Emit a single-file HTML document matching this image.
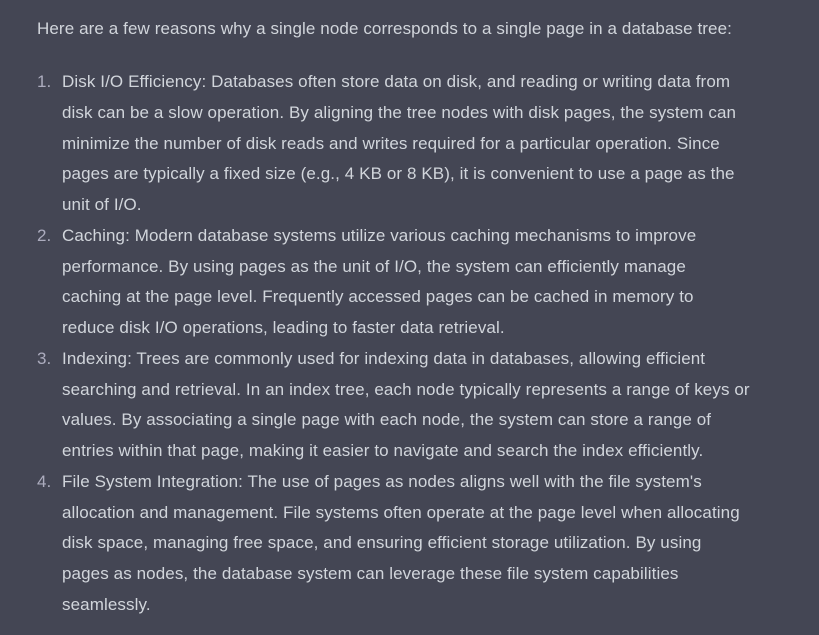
<!DOCTYPE html>
<html><head><meta charset="utf-8"><style>
html,body{margin:0;padding:0;width:819px;height:635px;background:#444654;overflow:hidden}
body{font-family:"Liberation Sans",sans-serif;font-size:17px;letter-spacing:0.1px;color:#d1d5db;position:relative}
.l{position:absolute;white-space:nowrap;line-height:30.77px;left:37px;top:14px}
#list{position:absolute;left:0;top:67px;width:819px}
#list div{height:30.77px;line-height:30.77px;white-space:nowrap;position:relative}
#list span.t{position:absolute;left:62px}
#list span.n{position:absolute;left:37px;top:0;color:#acacbe}
</style></head><body>
<div class="l">Here are a few reasons why a single node corresponds to a single page in a database tree:</div>
<div id="list">
<div><span class="n">1.</span><span class="t">Disk I/O Efficiency: Databases often store data on disk, and reading or writing data from</span></div>
<div><span class="t">disk can be a slow operation. By aligning the tree nodes with disk pages, the system can</span></div>
<div><span class="t">minimize the number of disk reads and writes required for a particular operation. Since</span></div>
<div><span class="t">pages are typically a fixed size (e.g., 4 KB or 8 KB), it is convenient to use a page as the</span></div>
<div><span class="t">unit of I/O.</span></div>
<div><span class="n">2.</span><span class="t">Caching: Modern database systems utilize various caching mechanisms to improve</span></div>
<div><span class="t">performance. By using pages as the unit of I/O, the system can efficiently manage</span></div>
<div><span class="t">caching at the page level. Frequently accessed pages can be cached in memory to</span></div>
<div><span class="t">reduce disk I/O operations, leading to faster data retrieval.</span></div>
<div><span class="n">3.</span><span class="t">Indexing: Trees are commonly used for indexing data in databases, allowing efficient</span></div>
<div><span class="t">searching and retrieval. In an index tree, each node typically represents a range of keys or</span></div>
<div><span class="t">values. By associating a single page with each node, the system can store a range of</span></div>
<div><span class="t">entries within that page, making it easier to navigate and search the index efficiently.</span></div>
<div><span class="n">4.</span><span class="t">File System Integration: The use of pages as nodes aligns well with the file system's</span></div>
<div><span class="t">allocation and management. File systems often operate at the page level when allocating</span></div>
<div><span class="t">disk space, managing free space, and ensuring efficient storage utilization. By using</span></div>
<div><span class="t">pages as nodes, the database system can leverage these file system capabilities</span></div>
<div><span class="t">seamlessly.</span></div>
</div>
</body></html>
